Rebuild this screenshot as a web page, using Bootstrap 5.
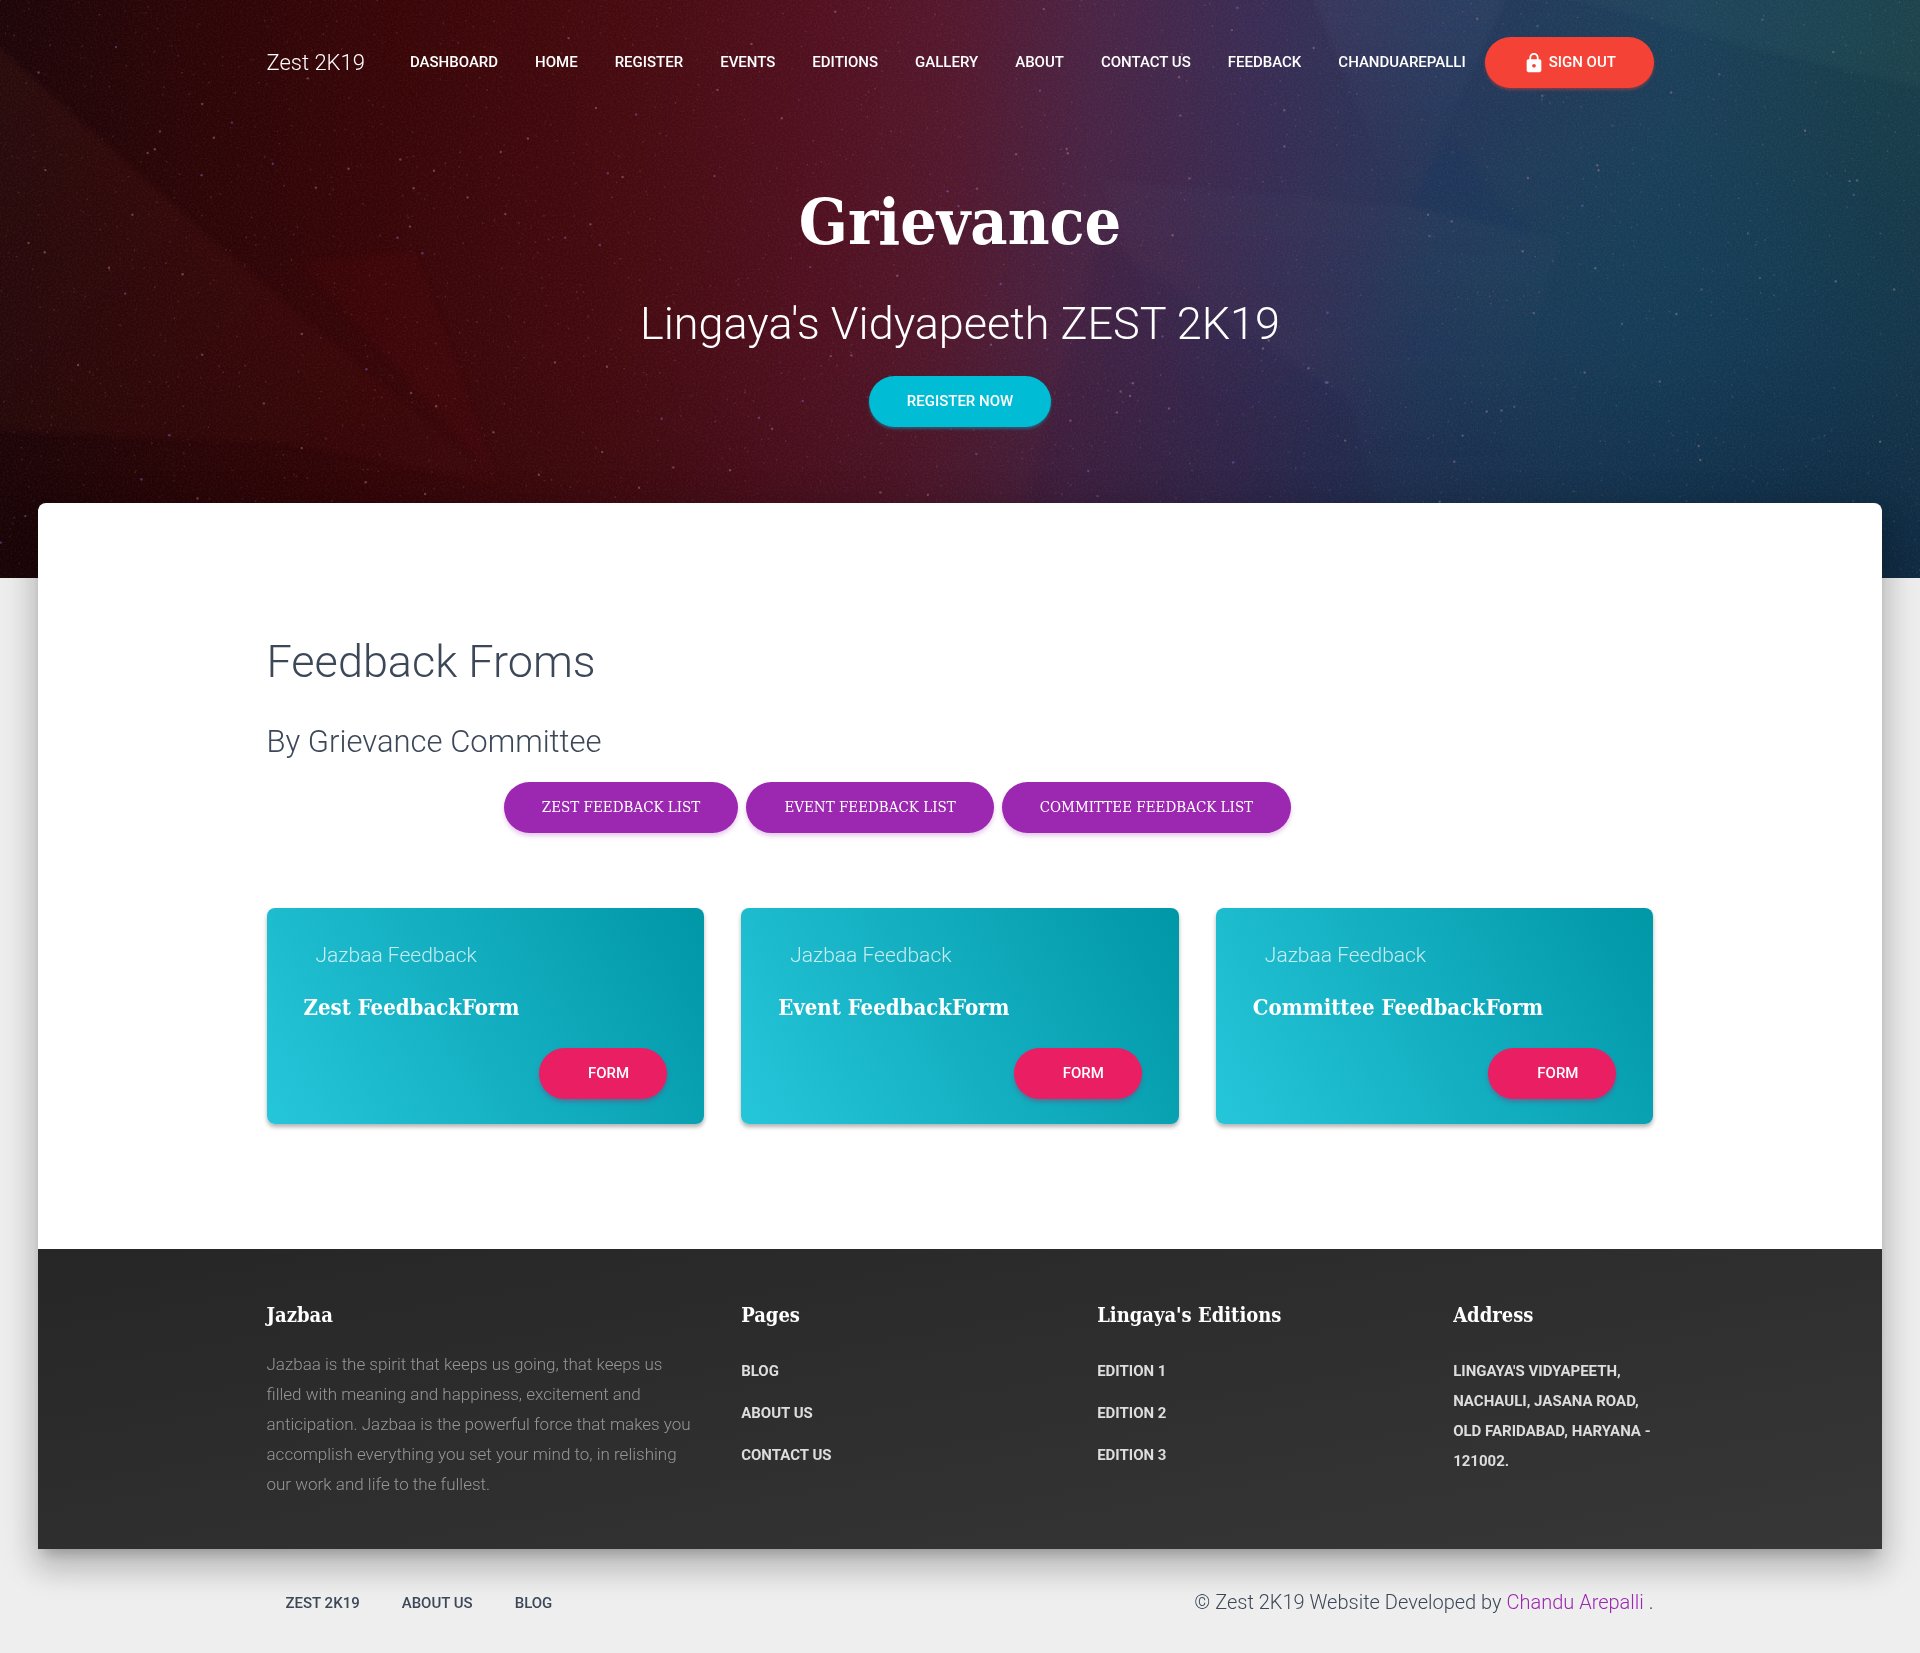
<!DOCTYPE html>
<html lang="en">
<head>
<meta charset="utf-8">
<meta name="viewport" content="width=device-width, initial-scale=1">
<title>Zest 2K19 - Grievance</title>
<link rel="stylesheet" href="https://cdn.jsdelivr.net/npm/bootstrap@5.3.0/dist/css/bootstrap.min.css">
<style>
  :root { --slab: "Roboto Slab", "DejaVu Serif Condensed", "DejaVu Serif", serif; }
  body { font-family: Roboto, "Liberation Sans", sans-serif; font-weight: 300; background: #eee; color: #3c4858; font-size: 17px; }
  a { text-decoration: none; }
  .slab { font-family: var(--slab); }
  .container { max-width: 1425px; --bs-gutter-x: 38px; }
  .row { --bs-gutter-x: 37px; }

  .hero { height: 578px; overflow: hidden; color: #fff;
    background:
      radial-gradient(ellipse 700px 500px at 100% 100%, rgba(14,48,88,.7), transparent),
      radial-gradient(ellipse 300px 220px at 85% 55%, rgba(20,80,100,.35), transparent),
      linear-gradient(94deg, #1c0508 0%, #2a0507 9%, #380507 20%, #460a0f 32%, #521020 42%, #54182e 49%, #4a2446 56%, #3a2c54 64%, #25385c 74%, #1a405a 86%, #173f4c 96%, #1a3e48 100%); }
  .hero-sky { position: absolute; inset: 0; width: 100%; height: 100%; }
  .site-nav { padding: 37px 0; }
  .site-nav .navbar-brand { font-size: 22px; line-height: 50px; padding: 0; margin: 0 27px 0 0; color: #fff; }
  .site-nav .navbar-nav .nav-link { color: #fff; font-size: 15px; font-weight: 500; line-height: 51px; padding: 0 19px 0 18px; white-space: nowrap; }

  .pill { display: inline-flex; align-items: center; justify-content: center; height: 51px; padding: 0 38px; border: 0; border-radius: 38px;
    color: #fff; font-size: 15px; font-weight: 500; text-transform: uppercase; white-space: nowrap; }
  .pill:hover { color: #fff; }
  .pill-danger { background: #f44336; box-shadow: 0 2px 3px rgba(244,67,54,.4); }
  .pill-info { background: #00bcd4; box-shadow: 0 2px 3px rgba(0,188,212,.4); }
  .pill-primary { background: #9c27b0; box-shadow: 0 3px 4px rgba(156,39,176,.25); font-family: var(--slab); font-weight: 400; }
  .pill-rose { background: #e91e63; box-shadow: 0 3px 4px rgba(160,30,99,.35); padding-left: 49px; }

  .hero-title { font-size: 64px; line-height: 78px; font-weight: 700; margin: 58px 0 29px; }
  .hero-sub { font-size: 45px; line-height: 68px; font-weight: 300; margin: 0 0 18px; }

  .sheet { margin: -75px 38px 0; border-radius: 8px 8px 0 0; background: #fff;
    box-shadow: 0 20px 30px 3px rgba(0,0,0,.14), 0 8px 38px 6px rgba(0,0,0,.12), 0 10px 13px -6px rgba(0,0,0,.2); }
  .forms { padding: 125px 0; }
  .forms h2 { font-size: 45px; line-height: 68px; font-weight: 300; margin: 0 0 23px; }
  .forms h3 { font-size: 31px; line-height: 45px; font-weight: 300; margin: 0 0 18px; }
  .form-cards { margin-top: 75px; }
  .info-tile { border-radius: 8px; background: linear-gradient(60deg, #26c6da, #0097a7); box-shadow: 0 3px 4px rgba(0,0,0,.3); padding: 26px 37px 25px; color: #fff; }
  .info-tile h6 { font-size: 21px; line-height: 42px; font-weight: 300; color: rgba(255,255,255,.75); margin: 0; padding-left: 12px; }
  .info-tile h4 { font-size: 22px; line-height: 34px; font-weight: 700; margin: 14px 0 24px; }

  .dark-foot { background: linear-gradient(170deg, #262626, #373737); color: #fff; padding: 50px 0; }
  .dark-foot h5 { font-size: 20px; line-height: 32px; font-weight: 700; margin: 0 0 18px; }
  .dark-foot p { line-height: 30px; color: #969696; margin: 0; padding-right: 10px; }
  .dark-foot li, .dark-foot address { font-size: 15px; font-weight: 700; line-height: 30px; color: #ddd; margin: 0; }
  .dark-foot a { color: #ddd; }
  .foot-list { display: flex; flex-direction: column; gap: 12px; padding-top: 7px; }
  .bottom-bar { padding: 33px 0 31px; line-height: 40px; }
  .bottom-bar ul a { color: #3c4858; font-size: 15px; font-weight: 500; }
  .bottom-bar ul { gap: 42px; padding-left: 19px; }
  .credit { font-size: 20px; }
  .accent { color: #9c27b0; }
</style>
<script src="https://cdn.jsdelivr.net/npm/bootstrap@5.3.0/dist/js/bootstrap.bundle.min.js"></script>
</head>
<body>
<header class="hero position-relative">
  <svg class="hero-sky" viewBox="0 0 1920 578" preserveAspectRatio="xMidYMid slice" aria-hidden="true">
    <defs>
      <linearGradient id="dusk" x1="0" y1="0" x2="0" y2="1"><stop offset="0" stop-color="#000" stop-opacity="0"/><stop offset=".6" stop-color="#000" stop-opacity=".05"/><stop offset="1" stop-color="#000" stop-opacity=".2"/></linearGradient>
      <linearGradient id="facet" x1="0" y1="0" x2="1" y2="1"><stop offset="0" stop-color="#8a4030" stop-opacity=".12"/><stop offset="1" stop-color="#8a2020" stop-opacity=".05"/></linearGradient>
      <linearGradient id="haze" x1="0" y1="0" x2="0" y2="1"><stop offset="0" stop-color="#7080a0" stop-opacity=".09"/><stop offset="1" stop-color="#7080a0" stop-opacity="0"/></linearGradient>
      <filter id="soft" color-interpolation-filters="sRGB"><feGaussianBlur stdDeviation="3"/></filter>
      <filter id="grain" color-interpolation-filters="sRGB"><feTurbulence type="fractalNoise" baseFrequency=".55" numOctaves="2" seed="4"/><feColorMatrix values="0 0 0 0 1  0 0 0 0 .8  0 0 0 0 .8  .5 0 0 0 -.18"/></filter>
    </defs>
    <rect width="1920" height="578" fill="url(#dusk)"/>
    <g filter="url(#soft)">
      <path d="M-20 30 L230 255 L500 485 L300 445 L-20 430Z" fill="url(#facet)"/>
      <path d="M300 262 L415 250 L500 485Z" fill="#8a1010" opacity=".07"/>
      <path d="M1310 -10 L1510 -10 L1440 140 L1400 210Z" fill="url(#haze)"/>
      <path d="M1540 -10 L1930 -10 L1930 90 L1760 50Z" fill="#6a9a90" opacity=".06"/>
      <path d="M1448 136 L1530 235 L1410 205Z" fill="#103060" opacity=".2"/>
      <path d="M1100 180 L1400 205 L1560 240 L1500 470 L1200 430Z" fill="url(#haze)" opacity=".5"/>
      <path d="M1100 240 L1350 400 L1400 600 L1000 600Z" fill="#101040" opacity=".08"/>
    </g>
    <rect width="1920" height="578" filter="url(#grain)" opacity=".25"/>
    <g id="stars"></g>
  </svg>
  <div class="container position-relative">
    <nav class="navbar navbar-expand site-nav">
      <a class="navbar-brand" href="#">Zest 2K19</a>
      <ul class="navbar-nav flex-grow-1">
        <li class="nav-item"><a class="nav-link" href="#">DASHBOARD</a></li>
        <li class="nav-item"><a class="nav-link" href="#">HOME</a></li>
        <li class="nav-item"><a class="nav-link" href="#">REGISTER</a></li>
        <li class="nav-item"><a class="nav-link" href="#">EVENTS</a></li>
        <li class="nav-item"><a class="nav-link" href="#">EDITIONS</a></li>
        <li class="nav-item"><a class="nav-link" href="#">GALLERY</a></li>
        <li class="nav-item"><a class="nav-link" href="#">ABOUT</a></li>
        <li class="nav-item"><a class="nav-link" href="#">CONTACT US</a></li>
        <li class="nav-item"><a class="nav-link" href="#">FEEDBACK</a></li>
        <li class="nav-item"><a class="nav-link" href="#">CHANDUAREPALLI</a></li>
        <li class="nav-item ms-auto"><a class="pill pill-danger" href="#"><svg class="me-1" width="22" height="22" viewBox="0 0 24 24" fill="#fff" aria-hidden="true"><path d="M18 8h-1V6c0-2.760-2.240-5-5-5S7 3.240 7 6v2H6c-1.100 0-2 .9-2 2v10c0 1.100.9 2 2 2h12c1.100 0 2-.9 2-2V10c0-1.100-.9-2-2-2zm-6 9c-1.100 0-2-.9-2-2s.9-2 2-2 2 .9 2 2-.9 2-2 2zm3.100-9H8.900V6c0-1.710 1.390-3.100 3.100-3.100s3.100 1.390 3.100 3.100v2z"/></svg>Sign out</a></li>
      </ul>
    </nav>
    <div class="text-center">
      <h1 class="hero-title slab">Grievance</h1>
      <h2 class="hero-sub">Lingaya's Vidyapeeth ZEST 2K19</h2>
      <a class="pill pill-info" href="#">Register now</a>
    </div>
  </div>
</header>

<main class="sheet position-relative">
  <section class="forms">
    <div class="container">
      <h2>Feedback Froms</h2>
      <h3>By Grievance Committee</h3>
      <div class="row">
        <div class="col-10 offset-2 d-flex flex-wrap gap-2">
          <a class="pill pill-primary" href="#">Zest Feedback List</a>
          <a class="pill pill-primary" href="#">Event Feedback List</a>
          <a class="pill pill-primary" href="#">Committee Feedback List</a>
        </div>
      </div>
      <div class="row form-cards">
        <div class="col-4"><div class="info-tile"><h6>Jazbaa Feedback</h6><h4 class="slab">Zest FeedbackForm</h4><div class="text-end"><a class="pill pill-rose" href="#">Form</a></div></div></div>
        <div class="col-4"><div class="info-tile"><h6>Jazbaa Feedback</h6><h4 class="slab">Event FeedbackForm</h4><div class="text-end"><a class="pill pill-rose" href="#">Form</a></div></div></div>
        <div class="col-4"><div class="info-tile"><h6>Jazbaa Feedback</h6><h4 class="slab">Committee FeedbackForm</h4><div class="text-end"><a class="pill pill-rose" href="#">Form</a></div></div></div>
      </div>
    </div>
  </section>
  <section class="dark-foot">
    <div class="container">
      <div class="row">
        <div class="col-4"><h5 class="slab">Jazbaa</h5>
          <p>Jazbaa is the spirit that keeps us going, that keeps us filled with meaning and happiness, excitement and anticipation. Jazbaa is the powerful force that makes you accomplish everything you set your mind to, in relishing our work and life to the fullest.</p></div>
        <div class="col-3"><h5 class="slab">Pages</h5>
          <ul class="list-unstyled foot-list"><li><a href="#">BLOG</a></li><li><a href="#">ABOUT US</a></li><li><a href="#">CONTACT US</a></li></ul></div>
        <div class="col-3"><h5 class="slab">Lingaya's Editions</h5>
          <ul class="list-unstyled foot-list"><li><a href="#">EDITION 1</a></li><li><a href="#">EDITION 2</a></li><li><a href="#">EDITION 3</a></li></ul></div>
        <div class="col-2"><h5 class="slab">Address</h5>
          <address class="foot-list">LINGAYA'S VIDYAPEETH, NACHAULI, JASANA ROAD, OLD FARIDABAD, HARYANA - 121002.</address></div>
      </div>
    </div>
  </section>
</main>

<footer class="bottom-bar position-relative">
  <div class="container d-flex justify-content-between">
    <ul class="list-unstyled d-flex mb-0"><li><a href="#">ZEST 2K19</a></li><li><a href="#">ABOUT US</a></li><li><a href="#">BLOG</a></li></ul>
    <div class="credit">© Zest 2K19 Website Developed by <a class="accent" href="#">Chandu Arepalli</a> .</div>
  </div>
</footer>
<script>
  // Scatter a fixed field of faint stars over the hero.
  let seed = 19;
  const rnd = () => (seed = (seed * 16807) % 2147483647) / 2147483647;
  let out = '';
  for (let i = 0; i < 2200; i++) {
    const bright = i % 12 === 0;
    const tint = rnd() < .3 ? '#8070d0' : '#b08a90';
    out += `<circle cx="${(rnd() * 1920).toFixed(1)}" cy="${(rnd() * 578).toFixed(1)}" r="${bright ? 1.2 : .9}" fill="${tint}" opacity="${(bright ? .45 : .1 + rnd() * .15).toFixed(2)}"/>`;
  }
  document.getElementById('stars').innerHTML = out;
</script>
</body>
</html>
